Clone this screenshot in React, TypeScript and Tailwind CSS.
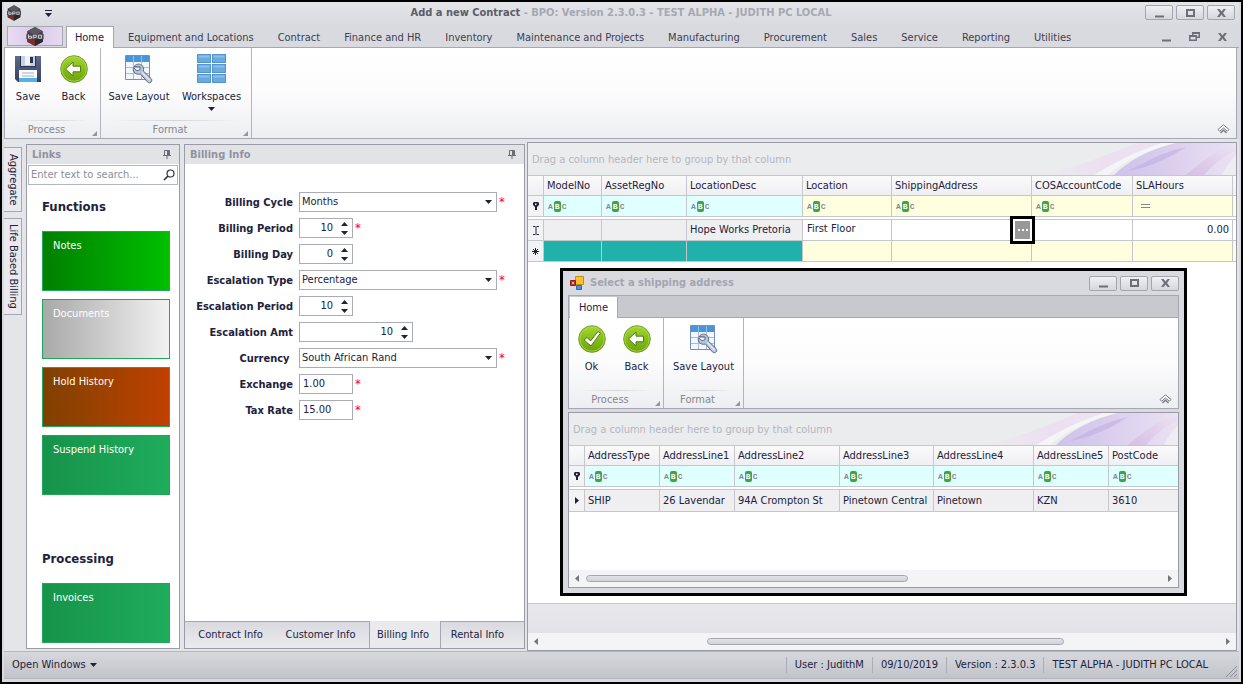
import React from 'react';
import clsx from 'clsx';

const menuTabs = [
  'Equipment and Locations',
  'Contract',
  'Finance and HR',
  'Inventory',
  'Maintenance and Projects',
  'Manufacturing',
  'Procurement',
  'Sales',
  'Service',
  'Reporting',
  'Utilities',
];

/* ---------- icons ---------- */

const LogoIcon = ({ className }: { className: string }) => (
  <svg viewBox="0 0 20 22" className={className} aria-hidden="true">
    <path d="M10 0 19 5v12l-9 5-9-5V5z" fill="#3d3a3e" />
    <path d="M10 0 19 5l-9 5-9-5z" fill="#5a585c" />
    <path d="M1 12v5l9 5v-7z" fill="#7a2d2f" />
    <path d="M10 15v7l9-5v-5z" fill="#2b292c" />
    <path d="M0 8h20v6H0z" fill="#4a484c" />
    <path d="M2.500 8.500v4.500h3.500v-2.200H2.500M8 13.500V9.500h3.500v2.500H8M14 9.500h3.500v3.500H14z" fill="none" stroke="#d8d6da" strokeWidth="1.100" />
  </svg>
);

const SaveIcon = () => (
  <svg viewBox="0 0 28 28" className="size-7" aria-hidden="true">
    <defs>
      <linearGradient id="floppy" x1="0" y1="0" x2="0" y2="1">
        <stop offset="0" stopColor="#5c6b8c" />
        <stop offset="1" stopColor="#36415c" />
      </linearGradient>
    </defs>
    <path d="M1 1h26v26H4l-3-3z" fill="url(#floppy)" />
    <path d="M6 1h16v11H6z" fill="#2c3550" />
    <path d="M7 1h14v10H7z" fill="#c9d0de" />
    <path d="M11 1h5v9h-5z" fill="#f0f3f8" />
    <path d="M16 2h3v6h-3z" fill="#2c3550" />
    <path d="M5 15h18v12H5z" fill="#fbfcfe" />
    <path d="M5 23h18v4H5z" fill="#5aaee6" />
    <path d="M8 18h12M8 21h12" stroke="#9fb0c8" />
  </svg>
);

const GreenDisc = ({ children }: { children: React.ReactNode }) => (
  <svg viewBox="0 0 28 28" className="size-7" aria-hidden="true">
    <defs>
      <linearGradient id="disc" x1="0" y1="0" x2="0" y2="1">
        <stop offset="0" stopColor="#a5d63a" />
        <stop offset="0.500" stopColor="#86bd17" />
        <stop offset="1" stopColor="#6aa30b" />
      </linearGradient>
    </defs>
    <circle cx="14" cy="14" r="13.300" fill="url(#disc)" stroke="#6f9f22" />
    <circle cx="14" cy="14" r="12.200" fill="none" stroke="#b6dd62" strokeWidth="0.700" />
    {children}
  </svg>
);

const BackIcon = () => (
  <GreenDisc>
    <path d="M5.500 14 13 7v4.200h7.500v5.600H13V21z" fill="#fff" stroke="#4f7d0c" strokeWidth="1" strokeLinejoin="round" />
  </GreenDisc>
);

const OkIcon = () => (
  <GreenDisc>
    <path d="m6 15 3-2.500 3.500 3.500 7.500-9.500 2.500 1.500L13 21z" fill="#fff" stroke="#4f7d0c" strokeWidth="1" strokeLinejoin="round" />
  </GreenDisc>
);

const SaveLayoutIcon = () => (
  <svg viewBox="0 0 30 30" className="size-[30px]" aria-hidden="true">
    <path d="M1.500 1.500h24v24h-24z" fill="#f3f7fc" stroke="#6f8fc0" />
    <path d="M2 2h23v6H2z" fill="#4c94d8" />
    <path d="M9.500 2v6M17.500 2v6" stroke="#8fc0ec" />
    <path d="M2 13.500h23M2 19.500h23M9.500 8v17M17.500 8v17" stroke="#a8bbdc" />
    <path
      d="M10 12.500c2-2.500 5-3 7.500-1.500 2 1.500 2.500 4 1.800 6l7.700 7.500c1 1 1 2.500 0 3.500s-2.500 1-3.500 0L16.500 20c-2.500.8-5 0-6.300-1.800-1-1.400-1.200-3-.7-4.500l3.500 3 2.800-.9.400-2.800z"
      fill="#b7c3d6"
      stroke="#5d6b84"
      strokeLinejoin="round"
    />
    <path d="m18.500 19 7 7" stroke="#e6ecf5" strokeWidth="1.200" strokeLinecap="round" />
  </svg>
);

const WorkspacesIcon = () => (
  <svg viewBox="0 0 30 30" className="size-[30px]" aria-hidden="true">
    {[0.5, 10.5, 20.5].map((y) =>
      [0.5, 15.5].map((x) => (
        <g key={`${x}-${y}`}>
          <rect x={x} y={y} width="13" height="8" fill="#69aae2" stroke="#5593cc" />
          <path d={`M${x + 1} ${y + 1}h11v2h-11z`} fill="#8cc0ec" />
        </g>
      )),
    )}
  </svg>
);

const Caret = ({ className = '' }: { className?: string }) => (
  <svg viewBox="0 0 7 4" className={clsx('w-[7px] h-1 fill-current', className)} aria-hidden="true">
    <path d="M0 0h7L3.500 4z" />
  </svg>
);

const SideArrow = ({ flip = false }: { flip?: boolean }) => (
  <svg viewBox="0 0 4 7" className={clsx('w-1 h-[7px] fill-[#74767f]', flip && 'rotate-180')} aria-hidden="true">
    <path d="M4 0v7L0 3.500z" />
  </svg>
);

const PinIcon = () => (
  <svg viewBox="0 0 8 9" className="w-2 h-[9px]" aria-hidden="true">
    <path d="M1.500 .5h5v5h-5zM0 5.500h8M4 6v3" fill="none" stroke="#6a6c77" />
    <path d="M4 1h2.500v4.500H4z" fill="#6a6c77" />
  </svg>
);

const CollapseIcon = () => (
  <svg viewBox="0 0 13 10" className="w-[13px] h-2.5" aria-hidden="true">
    <path d="M1 5.500 6.500 .8l5.500 4.700-1.700 1.800-3.800-3.400-3.800 3.400z" fill="#fff" stroke="#777983" />
    <path d="M3.500 9l3-2.800 3 2.800" fill="none" stroke="#777983" strokeWidth="1.300" />
  </svg>
);

/* soft petals in the corner of the group-by strips */
const Swirl = () => (
  <svg viewBox="0 0 200 32" preserveAspectRatio="xMaxYMid slice" className="w-[200px] h-full shrink-0" aria-hidden="true">
    <defs>
      <linearGradient id="petalA" x1="0" y1="0" x2="1" y2="0">
        <stop offset="0" stopColor="#ebecee" />
        <stop offset="0.550" stopColor="#ecdff0" />
        <stop offset="1" stopColor="#ece6f2" />
      </linearGradient>
      <linearGradient id="petalB" x1="0" y1="0" x2="1" y2="0">
        <stop offset="0" stopColor="#cdc2ea" />
        <stop offset="0.500" stopColor="#dcd0ee" />
        <stop offset="1" stopColor="#ebe2f3" />
      </linearGradient>
      <linearGradient id="petalC" x1="0" y1="1" x2="1" y2="0">
        <stop offset="0" stopColor="#d3b8e2" />
        <stop offset="1" stopColor="#ece3f4" />
      </linearGradient>
    </defs>
    <path d="M0 32C40 26 75 10 100 0h34C108 8 86 20 70 32z" fill="url(#petalA)" />
    <path d="M72 32c16-14 42-26 68-32h-14C100 8 78 20 58 32z" fill="#f5f4f7" />
    <path d="M78 32c14-14 36-26 62-32h60v32z" fill="url(#petalB)" />
    <path d="M92 28c20-10 32-18 58-24-16 10-34 20-58 24z" fill="#bfaee4" opacity="0.600" />
    <path d="M150 32c14-12 28-24 50-31v6c-16 8-24 16-32 25z" fill="url(#petalC)" opacity="0.800" />
    <path d="M186 32c4-8 8-14 14-20v20z" fill="#efedf2" />
  </svg>
);

/* ---------- window chrome ---------- */

const frameGlyphs = {
  min: 'M3 9.500h9v2H3z',
  max: 'M3 3h9v8H3zM5 5v4h5V5z',
  restore: 'M5 2h8v6h-3v3H2V5h3zM6.500 4v1H10v1.500h1.500V4zM3.500 7v2.500h5V7z',
  close: 'M3 3h2.500l2 2.500 2-2.500H12L9 7l3 4H9.500l-2-2.500-2 2.500H3l3-4z',
};

type Glyph = keyof typeof frameGlyphs;

const GlyphIcon = ({ name }: { name: Glyph }) => (
  <svg viewBox="0 0 15 14" className="w-[15px] h-3.5" aria-hidden="true">
    <path d={frameGlyphs[name]} fill="#6c6e78" fillRule="evenodd" />
  </svg>
);

const WindowButtons = () => (
  <div className="flex gap-[3px]">
    {(['min', 'max', 'close'] as Glyph[]).map((g) => (
      <button
        key={g}
        type="button"
        aria-label={g}
        className="flex h-[15px] w-7 items-center justify-center rounded-xs border border-[#a3a5af] bg-linear-to-b from-[#f0f0f3] to-[#d6d7dc]"
      >
        <GlyphIcon name={g} />
      </button>
    ))}
  </div>
);

type RibbonButtonProps = {
  icon: React.ReactNode;
  label: string;
  dropdown?: boolean;
  className: string;
};

const RibbonButton = ({ icon, label, dropdown, className }: RibbonButtonProps) => (
  <button type="button" className={clsx('flex flex-col items-center', className)}>
    <span className="flex h-[34px] items-center">{icon}</span>
    <span className="mt-[3px] leading-4 whitespace-nowrap">{label}</span>
    {dropdown && <Caret className="mt-0.5" />}
  </button>
);

const RibbonGroup = ({ title, className, children }: { title: string; className: string; children: React.ReactNode }) => (
  <section className={clsx('flex flex-col border-r border-[#b3b4bd]', className)}>
    <div className="flex flex-1 pt-1">{children}</div>
    <div className="mx-3 h-px bg-linear-to-r from-transparent via-[#d4d5da] to-transparent" />
    <div className="flex h-[17px] items-center pr-[3px]">
      <h2 className="flex-1 pt-px pr-1 text-center text-[#85878f]">{title}</h2>
      <svg viewBox="0 0 5 5" className="mt-2 size-[5px]" aria-hidden="true">
        <path d="M5 0v5H0z" fill="#94969f" />
      </svg>
    </div>
  </section>
);

const Ribbon = ({ children }: { children: React.ReactNode }) => (
  <div className="flex h-[91px] border border-[#a6a7b2] border-t-0 bg-linear-to-b from-white via-[#fcfcfd] to-[#edeef2]">
    {children}
    <button type="button" aria-label="Collapse ribbon" className="mt-auto mr-1.5 mb-1 ml-auto">
      <CollapseIcon />
    </button>
  </div>
);

/* ---------- grids ---------- */

type Column = { name: string; width: string; tint: string; numeric?: boolean };

const contractColumns: Column[] = [
  { name: 'ModelNo', width: 'w-[58px]', tint: 'bg-[#e0ffff]' },
  { name: 'AssetRegNo', width: 'w-[85px]', tint: 'bg-[#e0ffff]' },
  { name: 'LocationDesc', width: 'w-[116px]', tint: 'bg-[#e0ffff]' },
  { name: 'Location', width: 'w-[89px]', tint: 'bg-[#ffffe0]' },
  { name: 'ShippingAddress', width: 'w-[140px]', tint: 'bg-[#ffffe0]' },
  { name: 'COSAccountCode', width: 'w-[101px]', tint: 'bg-[#ffffe0]' },
  { name: 'SLAHours', width: 'w-[100px]', tint: 'bg-[#ffffe0]', numeric: true },
];

const addressColumns: Column[] = [
  { name: 'AddressType', width: 'w-[75px]', tint: 'bg-[#e0ffff]' },
  { name: 'AddressLine1', width: 'w-[75px]', tint: 'bg-[#e0ffff]' },
  { name: 'AddressLine2', width: 'w-[105px]', tint: 'bg-[#e0ffff]' },
  { name: 'AddressLine3', width: 'w-[94px]', tint: 'bg-[#e0ffff]' },
  { name: 'AddressLine4', width: 'w-[100px]', tint: 'bg-[#e0ffff]' },
  { name: 'AddressLine5', width: 'w-[75px]', tint: 'bg-[#e0ffff]' },
];

const address = ['SHIP', '26 Lavendar', '94A Crompton St', 'Pinetown Central', 'Pinetown', 'KZN', '3610'];

const cell = 'border-r border-b border-[#c6c7ce] px-[3px] text-left font-normal whitespace-nowrap';
const marker = 'border-r border-b border-[#c6c7ce] bg-[#f3f3f6] p-0';

const FilterMark = ({ numeric }: { numeric?: boolean }) =>
  numeric ? (
    <span className="flex pl-[5px]">
      <svg viewBox="0 0 9 4" className="h-1 w-[9px]" aria-hidden="true">
        <path d="M0 .5h9M0 3.500h9" stroke="#85878f" />
      </svg>
    </span>
  ) : (
    <span className="flex items-center gap-px pl-px font-['Liberation_Mono',monospace] text-[8px] leading-[11px] font-bold text-[#85878f]">
      A<b className="rounded-xs bg-[#3aa648] px-px text-white">B</b>C
    </span>
  );

const FilterPin = () => (
  <svg viewBox="0 0 6 8" className="mx-auto h-2 w-1.5" aria-hidden="true">
    <path d="M1 0h4l1 1v2L4 5v3H2V5L0 3V1z" fill="#20223c" />
    <path d="M2 1.500h1.500V3H2z" fill="#fff" />
  </svg>
);

const GroupStrip = () => (
  <div className="flex h-8 items-center overflow-hidden bg-[#ebecee]">
    <p className="flex-1 pt-0.5 pl-1 whitespace-nowrap text-[#b4b6be]">Drag a column header here to group by that column</p>
    <Swirl />
  </div>
);

const GridHead = ({ columns, last }: { columns: Column[]; last?: Column }) => (
  <thead>
    <tr className="h-[21px] bg-linear-to-b from-[#fbfbfc] to-[#efeff2]">
      <th className={clsx(cell, 'w-4 border-t')} aria-label="Row state" />
      {columns.map((c) => (
        <th key={c.name} scope="col" className={clsx(cell, c.width, 'border-t')}>
          {c.name}
        </th>
      ))}
      <th scope="col" className={clsx(cell, 'border-t border-r-0')}>
        {last?.name}
      </th>
    </tr>
    <tr className="h-[21px]">
      <td className={marker}>
        <FilterPin />
      </td>
      {columns.map((c) => (
        <td key={c.name} className={clsx(cell, c.tint)}>
          <FilterMark numeric={c.numeric} />
        </td>
      ))}
      <td className={clsx(cell, 'border-r-0', last ? last.tint : 'bg-[#ffffe0]')}>{last && <FilterMark />}</td>
    </tr>
    <tr className="h-[3px]">
      <td colSpan={columns.length + 2} className="border-b border-[#c6c7ce] p-0" />
    </tr>
  </thead>
);

const ScrollBar = ({ thumb }: { thumb: string }) => (
  <div className="flex h-[17px] items-center gap-[7px] bg-[#f4f4f7] px-1.5">
    <button type="button" aria-label="Scroll left">
      <SideArrow />
    </button>
    <div className="flex-1">
      <div className={clsx('h-[7px] rounded-full border border-[#a5a7b0] bg-linear-to-b from-[#e3e4e8] to-[#d0d1d7]', thumb)} />
    </div>
    <button type="button" aria-label="Scroll right">
      <SideArrow flip />
    </button>
  </div>
);

const ContractGrid = () => (
  <table className="w-full table-fixed border-separate border-spacing-0">
    <GridHead columns={contractColumns} />
    <tbody>
      <tr className="h-[21px]">
        <td className={marker}>
          <svg viewBox="0 0 6 9" className="mx-auto h-[9px] w-1.5" aria-hidden="true">
            <path d="M0 .5h2.500M3.500 .5H6M3 1v7M0 8.500h2.500M3.500 8.500H6" stroke="#20223c" fill="none" />
          </svg>
        </td>
        <td className={clsx(cell, 'bg-[#efeff2]')} />
        <td className={clsx(cell, 'bg-[#efeff2]')} />
        <td className={clsx(cell, 'bg-[#efeff2]')}>Hope Works Pretoria</td>
        <td className={clsx(cell, 'pb-0.5 pl-1')}>First Floor</td>
        <td className={clsx(cell, 'relative')}>
          <button
            type="button"
            aria-label="Select shipping address"
            className="absolute -top-1 -right-1 z-10 flex h-7 w-[25px] border-3 border-black bg-white p-0.5"
          >
            <span className="flex flex-1 items-center justify-center gap-0.5 bg-[#989898]">
              <i className="size-0.5 bg-white" />
              <i className="size-0.5 bg-white" />
              <i className="size-0.5 bg-white" />
            </span>
          </button>
        </td>
        <td className={cell} />
        <td className={clsx(cell, 'text-right')}>0.00</td>
        <td className={clsx(cell, 'border-r-0')} />
      </tr>
      <tr className="h-[21px]">
        <td className={marker}>
          <svg viewBox="0 0 7 7" className="mx-auto size-[7px]" aria-hidden="true">
            <path d="M3.500 0v7M0 3.500h7M1 1l5 5M6 1 1 6" stroke="#20223c" />
          </svg>
        </td>
        {contractColumns.map((c, i) => (
          <td key={c.name} className={clsx(cell, i < 3 ? 'bg-[#20b2aa]' : 'bg-[#ffffe0]')} />
        ))}
        <td className={clsx(cell, 'border-r-0 bg-[#ffffe0]')} />
      </tr>
    </tbody>
  </table>
);

/* ---------- side panels ---------- */

const DockHeader = ({ title }: { title: string }) => (
  <header className="flex h-[19px] items-center justify-between bg-[#e2e3e7] pr-2 pl-[5px]">
    <h2 className="font-bold text-[#9193a0]">{title}</h2>
    <button type="button" aria-label={`Pin ${title}`}>
      <PinIcon />
    </button>
  </header>
);

const Tile = ({ label, tone }: { label: string; tone: string }) => (
  <button type="button" className={clsx('flex h-[60px] w-full border border-[#22a65b] px-2.5 pt-1.5 text-white', tone)}>
    {label}
  </button>
);

const LinksPanel = () => (
  <aside className="flex w-[154px] shrink-0 flex-col border border-[#9a9ba6] bg-white">
    <DockHeader title="Links" />
    <div className="mx-px mt-px flex h-5 items-center border border-[#b4b6bf] pr-0.5">
      <input
        type="search"
        aria-label="Search links"
        placeholder="Enter text to search..."
        className="w-0 flex-1 pl-0.5 outline-none placeholder:text-[#8b8d98]"
      />
      <svg viewBox="0 0 12 12" className="size-3" aria-hidden="true">
        <circle cx="7.500" cy="4.500" r="3.500" fill="none" stroke="#30323f" strokeWidth="1.200" />
        <path d="M5 7 1 11" stroke="#30323f" strokeWidth="1.700" />
      </svg>
    </div>
    <nav className="pr-[9px] pl-[15px]">
      <h3 className="mt-[14px] text-[13px] leading-4 font-bold">Functions</h3>
      <div className="mt-4 flex flex-col gap-2">
        <Tile label="Notes" tone="bg-linear-to-r from-[#008000] to-[#00c000]" />
        <Tile label="Documents" tone="bg-linear-to-r from-[#a9a9a9] to-[#f2f2f2]" />
        <Tile label="Hold History" tone="bg-linear-to-r from-[#804000] to-[#c04000]" />
        <Tile label="Suspend History" tone="bg-linear-to-r from-[#16934a] to-[#1fad5c]" />
      </div>
      <h3 className="mt-14 text-[13px] leading-4 font-bold">Processing</h3>
      <div className="mt-4">
        <Tile label="Invoices" tone="bg-linear-to-r from-[#16934a] to-[#1fad5c]" />
      </div>
    </nav>
  </aside>
);

type Field = {
  id: string;
  label: string;
  kind: 'select' | 'spin' | 'text';
  value: string;
  width: string;
  required?: boolean;
};

const fields: Field[] = [
  { id: 'cycle', label: 'Billing Cycle', kind: 'select', value: 'Months', width: 'w-[198px]', required: true },
  { id: 'period', label: 'Billing Period', kind: 'spin', value: '10', width: 'w-[54px]', required: true },
  { id: 'day', label: 'Billing Day', kind: 'spin', value: '0', width: 'w-[54px]' },
  { id: 'escType', label: 'Escalation Type', kind: 'select', value: 'Percentage', width: 'w-[198px]', required: true },
  { id: 'escPeriod', label: 'Escalation Period', kind: 'spin', value: '10', width: 'w-[54px]' },
  { id: 'escAmt', label: 'Escalation Amt', kind: 'spin', value: '10', width: 'w-[114px]' },
  { id: 'currency', label: 'Currency\u00a0', kind: 'select', value: 'South African Rand', width: 'w-[198px]', required: true },
  { id: 'exchange', label: 'Exchange', kind: 'text', value: '1.00', width: 'w-[54px]', required: true },
  { id: 'tax', label: 'Tax Rate', kind: 'text', value: '15.00', width: 'w-[54px]', required: true },
];

const FieldControl = ({ field }: { field: Field }) => {
  if (field.kind === 'select') {
    return (
      <>
        <select id={field.id} className="w-full appearance-none pl-0.5 outline-none">
          <option>{field.value}</option>
        </select>
        <Caret className="pointer-events-none absolute top-[7px] right-1" />
      </>
    );
  }
  if (field.kind === 'spin') {
    return (
      <>
        <input id={field.id} defaultValue={field.value} className="w-0 flex-1 pr-2 text-right outline-none" />
        <span className="flex flex-col items-center gap-[5px] pr-1">
          <button type="button" aria-label="Increase">
            <Caret className="rotate-180" />
          </button>
          <button type="button" aria-label="Decrease">
            <Caret />
          </button>
        </span>
      </>
    );
  }
  return <input id={field.id} defaultValue={field.value} className="w-full pl-[3px] outline-none" />;
};

const BillingPanel = () => (
  <section className="flex w-[341px] shrink-0 flex-col border border-[#9a9ba6] bg-white">
    <DockHeader title="Billing Info" />
    <form className="mt-7 flex flex-col gap-1.5">
      {fields.map((f) => (
        <div key={f.id} className="flex h-5">
          <label htmlFor={f.id} className="w-[114px] pt-px pr-1.5 text-right leading-5 font-bold whitespace-nowrap">
            {f.label}
          </label>
          <div className={clsx('relative flex items-center border border-[#a9abb6]', f.width)}>
            <FieldControl field={f} />
          </div>
          {f.required && <span className="pt-0.5 pl-0.5 text-[13px] leading-4 text-[#ff0000]">*</span>}
        </div>
      ))}
    </form>
    <div className="mt-auto flex h-[27px] bg-[#e9e9ee]" role="tablist">
      {['Contract Info', 'Customer Info', 'Billing Info', 'Rental Info'].map((t) => (
        <button
          key={t}
          type="button"
          role="tab"
          aria-selected={t === 'Billing Info'}
          className={clsx(
            'whitespace-nowrap',
            t === 'Billing Info'
              ? 'w-[70px] pr-1'
              : 'border-t border-[#a6a7b2] bg-linear-to-b from-[#d9dae0] to-[#ebebef]',
            t === 'Contract Info' && 'w-[91px]',
            t === 'Customer Info' && 'w-[94px] border-r pr-1',
            t === 'Rental Info' && 'flex-1 border-l pr-2.5',
          )}
        >
          {t}
        </button>
      ))}
    </div>
  </section>
);

/* ---------- address dialog ---------- */

const AddressDialog = () => (
  <div
    role="dialog"
    aria-label="Select a shipping address"
    className="absolute top-[125px] left-8 z-20 flex h-[328px] w-[627px] flex-col border-3 border-black bg-[#d9dae0] px-[5px] pb-[5px]"
  >
    <div className="flex h-6 items-center">
      <svg viewBox="0 0 14 14" className="ml-0.5 size-3.5" aria-hidden="true">
        <path d="M5.500 .5h8v8h-8z" fill="#fbc02a" stroke="#c98a10" />
        <path d="M.5 4.500h5v5h-5z" fill="#c3352a" stroke="#8a1f18" />
        <path d="M2 6h2v2H2z" fill="#f5a59d" />
        <path d="M6.500 9.500h5v4h-5z" fill="#4b8fe6" stroke="#2f66b5" />
      </svg>
      <h2 className="flex-1 pl-1.5 font-bold text-[#a3a5b0]">Select a shipping address</h2>
      <WindowButtons />
    </div>
    <div className="flex h-[23px] border border-[#a6a7b2] bg-[#c8c9cf]">
      <button type="button" className="mt-px ml-px h-[22px] w-12 border-r border-[#a6a7b2] bg-white">
        Home
      </button>
    </div>
    <Ribbon>
      <RibbonGroup title="Process" className="w-[95px]">
        <RibbonButton icon={<OkIcon />} label="Ok" className="w-[45px]" />
        <RibbonButton icon={<BackIcon />} label="Back" className="w-[45px]" />
      </RibbonGroup>
      <RibbonGroup title="Format" className="w-20">
        <RibbonButton icon={<SaveLayoutIcon />} label="Save Layout" className="w-full" />
      </RibbonGroup>
    </Ribbon>
    <div className="mt-[3px] flex flex-1 flex-col border border-[#9a9ba6] bg-white">
      <GroupStrip />
      <table className="w-full table-fixed border-separate border-spacing-0">
        <GridHead columns={addressColumns} last={{ name: 'PostCode', width: '', tint: 'bg-[#e0ffff]' }} />
        <tbody>
          <tr className="h-[22px] bg-[#efeff2]">
            <td className={marker}>
              <svg viewBox="0 0 4 7" className="mx-auto h-[7px] w-1" aria-hidden="true">
                <path d="M0 0v7l4-3.500z" fill="#20223c" />
              </svg>
            </td>
            {address.map((v) => (
              <td key={v} className={clsx(cell, 'last:border-r-0')}>
                {v}
              </td>
            ))}
          </tr>
        </tbody>
      </table>
      <div className="mt-auto">
        <ScrollBar thumb="w-[56%]" />
      </div>
    </div>
  </div>
);

export default function App() {
  return (
    <div className="flex min-h-screen flex-col border-2 border-black bg-[#d9dae0] px-0.5 pb-[3px] font-['DejaVu_Sans_Condensed','Noto_Sans',sans-serif] text-[11px] leading-4 text-[#20223c]">
      <header className="flex h-6 items-start bg-linear-to-b from-[#e4e5e9] to-[#d9dae0] pt-[3px]">
        <div className="flex flex-1 items-center gap-6 pl-[3px]">
          <LogoIcon className="h-4 w-[14px]" />
          <button type="button" aria-label="Customize toolbar" className="flex flex-col items-center gap-0.5">
            <i className="h-px w-[7px] bg-[#20223c]" />
            <Caret />
          </button>
        </div>
        <h1 className="font-bold whitespace-nowrap text-[#a6a8b2]">
          <span className="text-[#5b5d68]">Add a new Contract</span> - BPO: Version 2.3.0.3 - TEST ALPHA - JUDITH PC LOCAL
        </h1>
        <div className="flex flex-1 justify-end pr-1">
          <WindowButtons />
        </div>
      </header>

      <div className="flex h-[22px] border-b border-[#a6a7b2]">
        <button
          type="button"
          aria-label="Application menu"
          className="mr-[3px] ml-[3px] flex h-5 w-14 items-center justify-center border border-[#a6a7b2] bg-linear-to-r from-[#e9dcf1] via-[#d9c8ea] to-[#e6daf0]"
        >
          <LogoIcon className="h-[19px] w-[18px]" />
        </button>
        <button type="button" className="h-[22px] w-12 border border-b-0 border-[#a6a7b2] bg-white pt-px pr-px">
          Home
        </button>
        <nav className="flex flex-1 pl-0.5">
          {menuTabs.map((t) => (
            <button key={t} type="button" className="px-3 pt-0.5 whitespace-nowrap text-[#3c3e50]">
              {t}
            </button>
          ))}
        </nav>
        <div className="flex items-center gap-[13px] pr-[9px]">
          {(['min', 'restore', 'close'] as Glyph[]).map((g) => (
            <button key={g} type="button" aria-label={`${g} document`}>
              <GlyphIcon name={g} />
            </button>
          ))}
        </div>
      </div>

      <div className="mr-0.5">
        <Ribbon>
          <RibbonGroup title="Process" className="w-24">
            <RibbonButton icon={<SaveIcon />} label="Save" className="w-[46px]" />
            <RibbonButton icon={<BackIcon />} label="Back" className="w-[45px]" />
          </RibbonGroup>
          <RibbonGroup title="Format" className="w-[151px]">
            <RibbonButton icon={<SaveLayoutIcon />} label="Save Layout" className="w-[76px]" />
            <RibbonButton icon={<WorkspacesIcon />} label="Workspaces" dropdown className="w-[69px]" />
          </RibbonGroup>
        </Ribbon>
      </div>

      <main className="flex flex-1 gap-1 bg-[#e4e5e9] pt-[3px] pr-0.5">
        <div className="flex w-[18px] flex-col gap-1.5 pt-[5px]">
          {['Aggregate', 'Life Based Billing'].map((t) => (
            <button
              key={t}
              type="button"
              className={clsx(
                'flex items-center justify-center border border-l-0 border-[#a6a7b2] bg-[#e9e9ee] whitespace-nowrap',
                t === 'Aggregate' ? 'h-[65px]' : 'h-[97px]',
              )}
            >
              <span className="[writing-mode:vertical-rl]">{t}</span>
            </button>
          ))}
        </div>
        <div className="flex py-0.5">
          <LinksPanel />
        </div>
        <div className="flex py-0.5">
          <BillingPanel />
        </div>
        <section className="relative -ml-0.5 flex min-w-0 flex-1 flex-col border border-[#9a9ba6] bg-white">
          <GroupStrip />
          <ContractGrid />
          <div className="mt-auto h-[30px] border-t border-[#c6c7ce] bg-linear-to-b from-[#e9e9ed] to-[#e2e2e7]" />
          <ScrollBar thumb="ml-[24%] w-[53%]" />
          <AddressDialog />
        </section>
      </main>

      <footer className="flex h-7 items-center border-y border-[#b3b4bd] bg-linear-to-b from-[#d7d8dc] to-[#c3c4cb] pl-2">
        <button type="button" className="flex items-center gap-1">
          Open Windows <Caret />
        </button>
        <div className="ml-auto flex items-center">
          {['User : JudithM', '09/10/2019', 'Version : 2.3.0.3', 'TEST ALPHA - JUDITH PC LOCAL'].map((t) => (
            <span key={t} className="border-l border-[#acadb6] px-2 whitespace-nowrap">
              {t}
            </span>
          ))}
        </div>
        <svg viewBox="0 0 11 11" className="mt-3 mr-0.5 ml-2.5 size-[11px]" aria-hidden="true">
          <path d="M0 11 11 0M4 11l7-7M8 11l3-3" stroke="#8e9099" />
        </svg>
      </footer>
    </div>
  );
}
